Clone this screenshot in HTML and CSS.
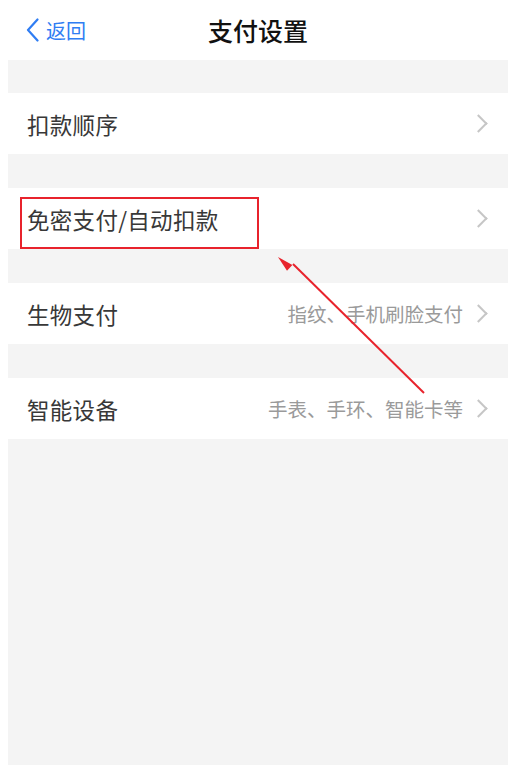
FILE: index.html
```html
<!DOCTYPE html>
<html lang="zh-CN">
<head>
    <meta charset="UTF-8">
    <meta name="viewport" content="width=device-width, initial-scale=1.0">
    <title>支付设置</title>
    <link rel="stylesheet" href="styles.css">
</head>
<body>
    <main class="page">
        <header class="topbar">
            <a class="back" href="#">
                <svg class="back-icon" viewBox="0 0 13 24" width="13" height="24">
                    <path d="M11.5 1.5 L2 12 L11.5 22.5" fill="none" stroke="#2f7df3" stroke-width="2.2" stroke-linecap="round" stroke-linejoin="round"/>
                </svg>
                <span>返回</span>
            </a>
            <h1 class="title">支付设置</h1>
            <span></span>
        </header>

        <section class="list">
            <div class="row first">
                <span class="label">扣款顺序</span>
                <span class="more"><i class="arrow"></i></span>
            </div>
            <div class="row">
                <span class="label">免密支付/自动扣款</span>
                <span class="more"><i class="arrow"></i></span>
                <div class="mark"></div>
            </div>
            <div class="row">
                <span class="label">生物支付</span>
                <span class="more">指纹、手机刷脸支付<i class="arrow"></i></span>
            </div>
            <div class="row">
                <span class="label">智能设备</span>
                <span class="more">手表、手环、智能卡等<i class="arrow"></i></span>
            </div>
        </section>

        <!-- arrow pointing at the marked row -->
        <svg class="pointer" viewBox="0 0 500 765" width="500" height="765">
            <line x1="416" y1="393" x2="285" y2="264" stroke="#e8232c" stroke-width="2"/>
            <polygon points="270,257 284.4,265 279,270.8" fill="#e8232c"/>
        </svg>
    </main>
</body>
</html>
```

FILE: styles.css
```css
body {
    margin: 0;
    background: #fff;
    font-family: "Noto Sans CJK SC", "Noto Sans", sans-serif;
}
.page {
    position: relative;
    margin-left: 8px;
    min-height: 765px;
    background-color: #f4f4f4;
    overflow: hidden;
}
.topbar {
    height: 60px;
    background: #fff;
    display: grid;
    grid-template-columns: 1fr auto 1fr;
    align-items: center;
}
.back {
    display: flex;
    align-items: center;
    gap: 7px;
    padding-left: 18px;
    color: #2f7df3;
    font-size: 20px;
    text-decoration: none;
}
.title {
    margin: 0;
    font-size: 25px;
    font-weight: 500;
    color: #111;
}
.list {
    padding-top: 33px;
}
.row {
    position: relative;
    height: 61px;
    margin-top: 34px;
    padding: 0 20px 0 19px;
    background: #fff;
    display: flex;
    align-items: center;
    justify-content: space-between;
}
.row.first {
    margin-top: 0;
}
.label {
    font-size: 22.5px;
    color: #383838;
    letter-spacing: 0.3px;
}
.more {
    display: flex;
    align-items: center;
    font-size: 19.5px;
    color: #9a9a9a;
}
.arrow {
    display: inline-block;
    width: 11px;
    height: 11px;
    margin-left: 9px;
    margin-right: 3px;
    border-top: 2px solid #c6c6c6;
    border-right: 2px solid #c6c6c6;
    transform: rotate(45deg);
}
.mark {
    position: absolute;
    left: 12px;
    top: 9px;
    width: 235px;
    height: 48px;
    border: 2px solid #e8232c;
}
.pointer {
    position: absolute;
    left: 0;
    top: 0;
    pointer-events: none;
}
```
